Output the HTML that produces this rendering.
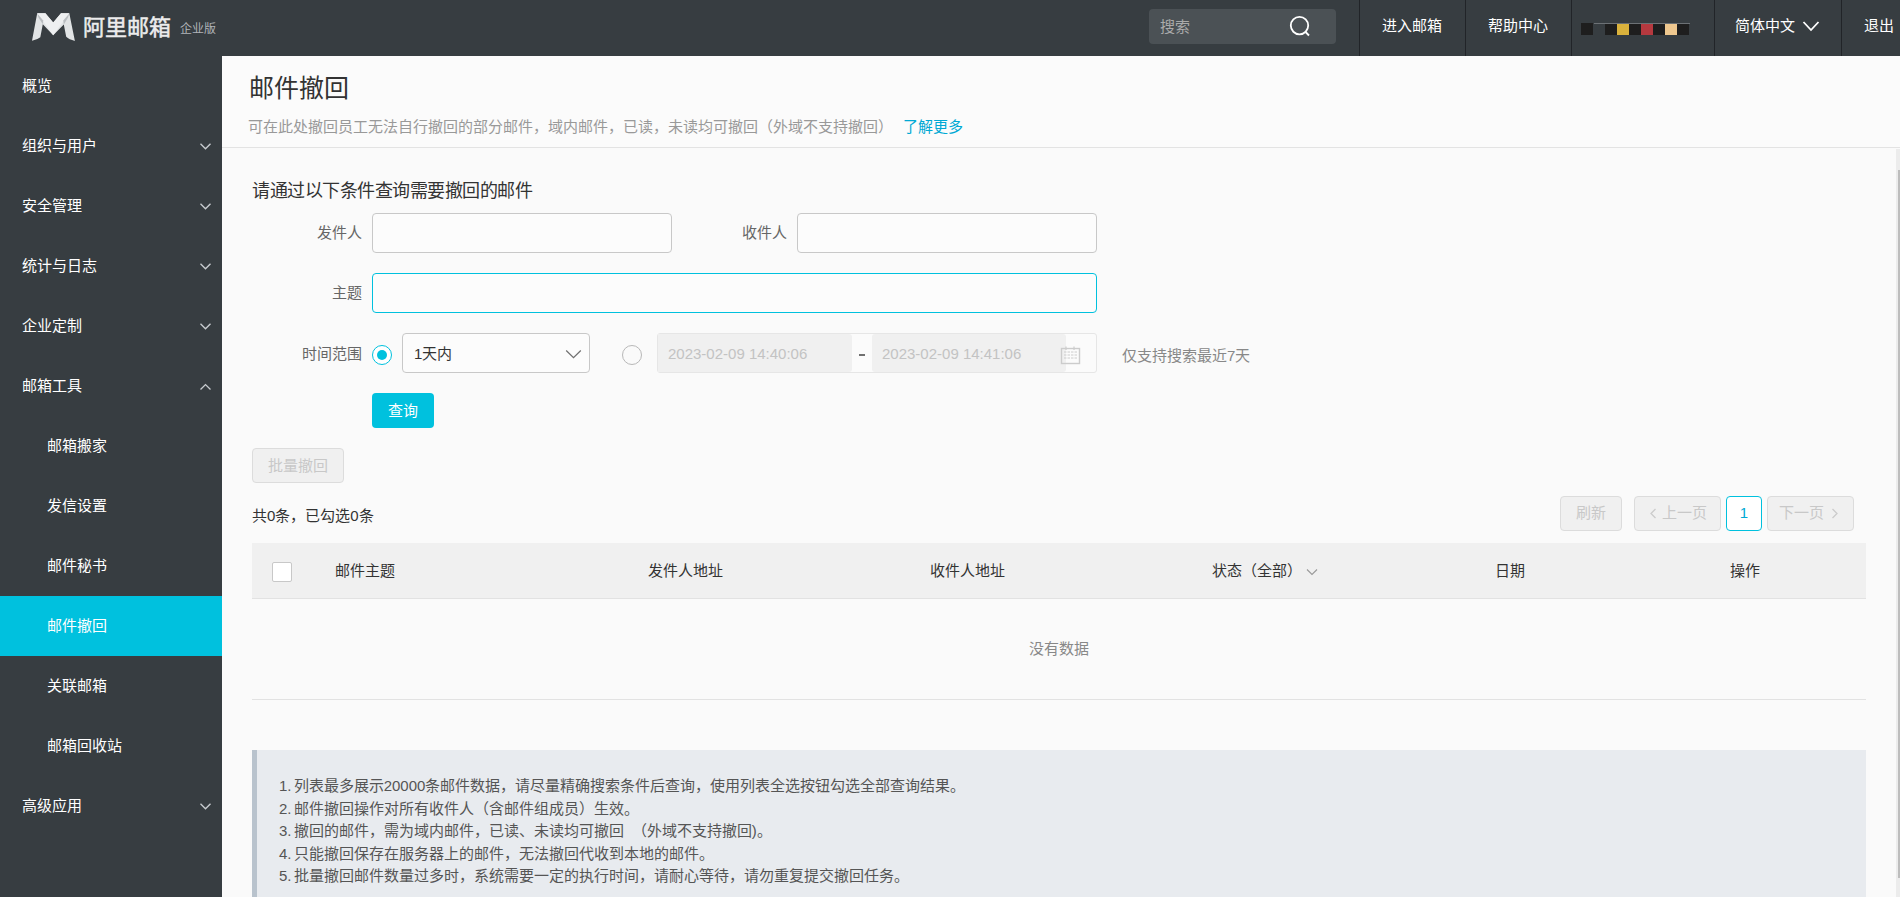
<!DOCTYPE html>
<html lang="zh-CN"><head><meta charset="utf-8">
<style>
*{box-sizing:border-box;margin:0;padding:0}
html,body{width:1900px;height:897px;overflow:hidden;background:#fafafa;font-family:"Liberation Sans",sans-serif;font-size:15px;color:#333}
.abs{position:absolute}
#top{position:absolute;left:0;top:0;width:1900px;height:56px;background:#373d41}
#side{position:absolute;left:0;top:56px;width:222px;height:841px;background:#373d41}
#main{position:absolute;left:222px;top:56px;width:1678px;height:841px;background:#fafafa}
.sep{position:absolute;top:0;width:1px;height:56px;background:#212428}
.nav{position:absolute;top:0;height:56px;line-height:52px;color:#fff;font-size:15px;white-space:nowrap}
.si{position:absolute;left:0;width:222px;height:60px;line-height:60px;color:#fff;font-size:15px;font-weight:500;white-space:nowrap}
.si span{position:absolute;left:22px;top:0}
.si.sub span{left:47px}
.si.act{background:#00c1de}
.chev{position:absolute;left:199.5px;top:27px;width:11px;height:8px}
.lbl{position:absolute;left:262px;width:100px;text-align:right;font-size:15px;line-height:20px;color:#666;margin-top:1px}
.inp{position:absolute;height:40px;border:1px solid #c8c8c8;border-radius:4px;background:#fcfcfc}
.btn.dis{height:35px;border:1px solid #dcdcdc;border-radius:4px;background:#f0f0f0;color:#c8c8c8;text-align:center;line-height:33px;font-size:15px}
.th{position:absolute;top:561px;font-size:15px;line-height:20px;color:#333;white-space:nowrap}
</style></head>
<body>
<div id="top">
  <svg class="abs" style="left:28px;top:8px" width="52" height="38" viewBox="0 0 52 38">
    <path d="M4 32.8 L9.2 5.2 L17.4 5.2 L25.2 14.6 L33 5.2 L41.3 5.2 L46.9 32.9 Q41 31.5 38.2 28.8 L35.8 16.6 L25.2 27.2 L14.8 16.2 L12.3 29.2 Q9.5 31.6 4 32.8 Z" fill="#e1e4e5"/>
    <path d="M9.2 5.2 L17.4 5.2 L25.2 14.6 L33 5.2 L41.3 5.2 L25.2 27.2 Z" fill="#eef0f1"/>
    <path d="M9.2 5.6 L10.5 9.5 L14.8 16.2 L15.2 12.5 Z" fill="#b9bdc0"/>
    <path d="M41.3 5.4 L40 9.5 L35.8 16.6 L35.3 12.5 Z" fill="#b9bdc0"/>
  </svg>
  <div class="abs" style="left:83px;top:13px;color:#ececec;font-size:22px;font-weight:400;line-height:30px;letter-spacing:0px;-webkit-text-stroke:0.5px #ececec">阿里邮箱</div>
  <div class="abs" style="left:180px;top:20px;color:#b0b4b8;font-size:12px;line-height:18px">企业版</div>
  <div class="abs" style="left:1149px;top:9px;width:187px;height:35px;border-radius:4px;background:#4b5155"></div>
  <div class="abs" style="left:1160px;top:17px;color:#aaa;font-size:15px;line-height:20px">搜索</div>
  <svg class="abs" style="left:1288px;top:14px" width="26" height="26" viewBox="0 0 26 26">
    <circle cx="11.5" cy="11.6" r="8.7" fill="none" stroke="#fff" stroke-width="1.8"/>
    <path d="M17.6 18 L21 21.5" stroke="#fff" stroke-width="1.8" fill="none"/>
  </svg>
  <div class="sep" style="left:1359px"></div>
  <div class="sep" style="left:1465px"></div>
  <div class="sep" style="left:1571px"></div>
  <div class="sep" style="left:1714px"></div>
  <div class="sep" style="left:1841px"></div>
  <div class="nav" style="left:1382px">进入邮箱</div>
  <div class="nav" style="left:1488px">帮助中心</div>
  <div class="abs" style="left:1581px;top:23px;width:108px;height:12px;display:flex">
    <i style="width:12px;background:#1e1e1e"></i><i style="width:12px;background:transparent"></i><i style="width:12px;background:#1e1e1e"></i><i style="width:12px;background:#dab23c"></i><i style="width:12px;background:#1e1e1e"></i><i style="width:12px;background:#b6393f"></i><i style="width:12px;background:#1e1e1e"></i><i style="width:12px;background:#efc88f"></i><i style="width:12px;background:#1e1e1e"></i>
  </div>
  <div class="abs" style="left:1594px;top:23px;width:96px;height:1px;background:#6c7175"></div>
  <div class="nav" style="left:1735px">简体中文</div>
  <svg class="abs" style="left:1802px;top:20px" width="18" height="13" viewBox="0 0 18 13"><path d="M1.5 2 L9 10 L16.5 2" fill="none" stroke="#fff" stroke-width="1.8"/></svg>
  <div class="nav" style="left:1864px">退出</div>
</div>

<div id="side">
  <div class="si" style="top:0"><span>概览</span></div>
  <div class="si" style="top:60px"><span>组织与用户</span><svg class="chev" viewBox="0 0 11 8"><path d="M0.5 0.7 L5.5 5.7 L10.5 0.7" fill="none" stroke="#c8ccd0" stroke-width="1.35"/></svg></div>
  <div class="si" style="top:120px"><span>安全管理</span><svg class="chev" viewBox="0 0 11 8"><path d="M0.5 0.7 L5.5 5.7 L10.5 0.7" fill="none" stroke="#c8ccd0" stroke-width="1.35"/></svg></div>
  <div class="si" style="top:180px"><span>统计与日志</span><svg class="chev" viewBox="0 0 11 8"><path d="M0.5 0.7 L5.5 5.7 L10.5 0.7" fill="none" stroke="#c8ccd0" stroke-width="1.35"/></svg></div>
  <div class="si" style="top:240px"><span>企业定制</span><svg class="chev" viewBox="0 0 11 8"><path d="M0.5 0.7 L5.5 5.7 L10.5 0.7" fill="none" stroke="#c8ccd0" stroke-width="1.35"/></svg></div>
  <div class="si" style="top:300px"><span>邮箱工具</span><svg class="chev" viewBox="0 0 11 8"><path d="M0.5 6.6 L5.5 1.6 L10.5 6.6" fill="none" stroke="#c8ccd0" stroke-width="1.35"/></svg></div>
  <div class="si sub" style="top:360px"><span>邮箱搬家</span></div>
  <div class="si sub" style="top:420px"><span>发信设置</span></div>
  <div class="si sub" style="top:480px"><span>邮件秘书</span></div>
  <div class="si sub act" style="top:540px"><span>邮件撤回</span></div>
  <div class="si sub" style="top:600px"><span>关联邮箱</span></div>
  <div class="si sub" style="top:660px"><span>邮箱回收站</span></div>
  <div class="si" style="top:720px"><span>高级应用</span><svg class="chev" viewBox="0 0 11 8"><path d="M0.5 0.7 L5.5 5.7 L10.5 0.7" fill="none" stroke="#c8ccd0" stroke-width="1.35"/></svg></div>
</div>

<div id="main">
  <div class="abs" style="left:0;top:0;width:1678px;height:92px;background:#fbfbfb;border-bottom:1px solid #e3e3e3"></div>
  <div class="abs" style="left:27px;top:17px;font-size:25px;line-height:30px;color:#333;font-weight:300">邮件撤回</div>
  <div class="abs" style="left:26px;top:61px;font-size:15px;line-height:20px;color:#999;white-space:nowrap">可在此处撤回员工无法自行撤回的部分邮件，域内邮件，已读，未读均可撤回（外域不支持撤回）<span style="color:#00a9d4;margin-left:10px">了解更多</span></div>
</div>
<div id="scroll" class="abs" style="left:1896px;top:149px;width:4px;height:748px;background:#ececec"><div class="abs" style="left:2px;top:21px;width:2px;height:708px;background:#bdbdbd"></div></div>

<div id="form">
  <div class="abs" style="left:252px;top:179px;font-size:18px;letter-spacing:-0.5px;line-height:24px;color:#333">请通过以下条件查询需要撤回的邮件</div>
  <div class="lbl" style="top:222px">发件人</div>
  <div class="inp" style="left:372px;top:213px;width:300px"></div>
  <div class="lbl" style="top:222px;left:687px">收件人</div>
  <div class="inp" style="left:797px;top:213px;width:300px"></div>
  <div class="lbl" style="top:282px">主题</div>
  <div class="inp" style="left:372px;top:273px;width:725px;border-color:#00c1de"></div>
  <div class="lbl" style="top:343px">时间范围</div>
  <div class="abs" style="left:372px;top:345px;width:20px;height:20px;border-radius:50%;border:1.5px solid #00c1de;background:#fff"><div class="abs" style="left:3.5px;top:3.5px;width:10px;height:10px;border-radius:50%;background:#00c1de"></div></div>
  <div class="inp" style="left:402px;top:333px;width:188px"></div>
  <div class="abs" style="left:414px;top:344px;font-size:15px;line-height:20px;color:#333">1天内</div>
  <svg class="abs" style="left:565px;top:348px" width="17" height="12" viewBox="0 0 17 12"><path d="M1.2 2.5 L8.5 9.6 L15.8 2.5" fill="none" stroke="#707070" stroke-width="1.25"/></svg>
  <div class="abs" style="left:622px;top:345px;width:20px;height:20px;border-radius:50%;border:1px solid #b8b8b8;background:transparent"></div>
  <div class="abs" style="left:657px;top:333px;width:440px;height:40px;border:1px solid #e6e6e6;border-radius:3px;background:#fbfbfb"></div>
  <div class="abs" style="left:658px;top:334px;width:194px;height:38px;border-radius:0 3px 3px 0;background:#f0f0f0"></div>
  <div class="abs" style="left:872px;top:334px;width:194px;height:38px;border-radius:3px;background:#f0f0f0"></div>
  <div class="abs" style="left:668px;top:344px;font-size:15px;line-height:20px;color:#c3c3c3">2023-02-09 14:40:06</div>
  <div class="abs" style="left:859px;top:354px;width:6px;height:2px;background:#707070"></div>
  <div class="abs" style="left:882px;top:344px;font-size:15px;line-height:20px;color:#c3c3c3">2023-02-09 14:41:06</div>
  <svg class="abs" style="left:1060px;top:346px" width="22" height="19" viewBox="0 0 22 19">
    <rect x="1.5" y="2.5" width="18" height="15" fill="none" stroke="#ccc" stroke-width="1.4"/>
    <path d="M6 0.5 V4 M14 0.5 V4" stroke="#ccc" stroke-width="1.2"/>
    <path d="M4 6 H17 M4 9 H17 M4 12 H17" stroke="#ccc" stroke-width="1" stroke-dasharray="2.5 1"/>
  </svg>
  <div class="abs" style="left:1122px;top:346px;font-size:15px;line-height:20px;color:#888">仅支持搜索最近7天</div>
  <div class="abs btn" style="left:372px;top:393px;width:62px;height:35px;background:#00c1de;color:#fff;border-radius:4px;text-align:center;line-height:35px;font-size:15px">查询</div>
  <div class="abs btn dis" style="left:252px;top:448px;width:92px">批量撤回</div>
  <div class="abs" style="left:252px;top:506px;font-size:15px;line-height:20px;color:#333">共0条，已勾选0条</div>
  <div class="abs btn dis" style="left:1560px;top:496px;width:62px;line-height:31px">刷新</div>
  <div class="abs btn dis" style="left:1634px;top:496px;width:87px"></div>
  <svg class="abs" style="left:1649px;top:508px" width="8" height="11" viewBox="0 0 8 11"><path d="M6.5 1 L2 5.5 L6.5 10" fill="none" stroke="#cbcbcb" stroke-width="1.3"/></svg>
  <div class="abs" style="left:1662px;top:503px;font-size:15px;line-height:20px;color:#c8c8c8">上一页</div>
  <div class="abs btn" style="left:1726px;top:496px;width:36px;height:35px;border:1px solid #00c1de;border-radius:4px;background:#fff;color:#00a9d4;text-align:center;line-height:32px;font-size:15px">1</div>
  <div class="abs btn dis" style="left:1767px;top:496px;width:87px"></div>
  <svg class="abs" style="left:1831px;top:508px" width="8" height="11" viewBox="0 0 8 11"><path d="M1.5 1 L6 5.5 L1.5 10" fill="none" stroke="#cbcbcb" stroke-width="1.3"/></svg>
  <div class="abs" style="left:1779px;top:503px;font-size:15px;line-height:20px;color:#c8c8c8">下一页</div>

  <div class="abs" style="left:252px;top:543px;width:1614px;height:56px;background:#f0f0f0;border-bottom:1px solid #e2e2e2"></div>
  <div class="abs" style="left:272px;top:562px;width:20px;height:20px;border:1px solid #c8c8c8;border-radius:2px;background:#fff"></div>
  <div class="th" style="left:335px">邮件主题</div>
  <div class="th" style="left:648px">发件人地址</div>
  <div class="th" style="left:930px">收件人地址</div>
  <div class="th" style="left:1212px">状态（全部）</div>
  <svg class="abs" style="left:1306px;top:568px" width="12" height="8" viewBox="0 0 12 8"><path d="M1 1.5 L6 6.5 L11 1.5" fill="none" stroke="#999" stroke-width="1.1"/></svg>
  <div class="th" style="left:1495px">日期</div>
  <div class="th" style="left:1730px">操作</div>
  <div class="abs" style="left:252px;top:639px;width:1614px;text-align:center;font-size:15px;line-height:20px;color:#888">没有数据</div>
  <div class="abs" style="left:252px;top:699px;width:1614px;height:1px;background:#e2e2e2"></div>

  <div class="abs" style="left:252px;top:750px;width:1614px;height:147px;background:#e8ebef;border-left:5px solid #b9c3cd"></div>
  <div class="abs" style="left:279px;top:775px;font-size:15px;line-height:22.5px;color:#555;white-space:nowrap;word-spacing:-2px">
    <div>1. 列表最多展示20000条邮件数据，请尽量精确搜索条件后查询，使用列表全选按钮勾选全部查询结果。</div>
    <div>2. 邮件撤回操作对所有收件人（含邮件组成员）生效。</div>
    <div>3. 撤回的邮件，需为域内邮件，已读、未读均可撤回<span style="margin-left:8px">（</span>外域不支持撤回)。</div>
    <div>4. 只能撤回保存在服务器上的邮件，无法撤回代收到本地的邮件。</div>
    <div>5. 批量撤回邮件数量过多时，系统需要一定的执行时间，请耐心等待，请勿重复提交撤回任务。</div>
  </div>
</div>
</body></html>
